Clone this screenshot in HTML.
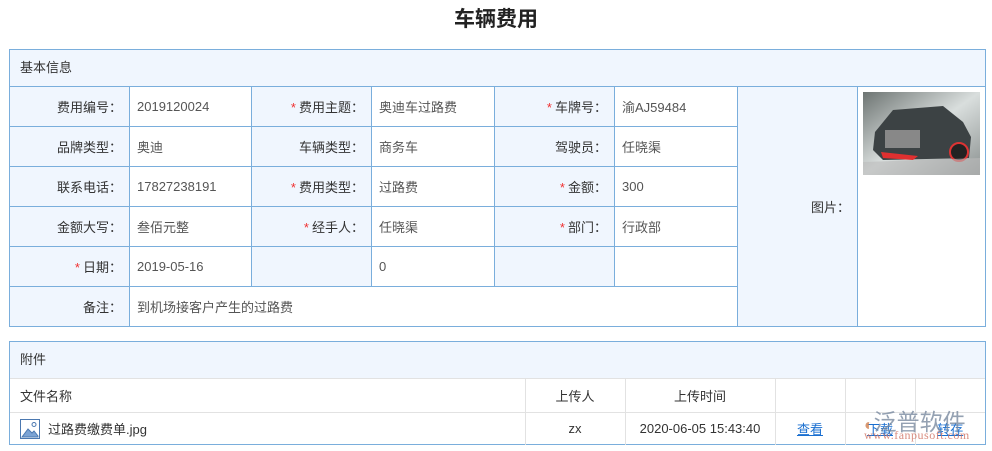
<!DOCTYPE html>
<html><head><meta charset="utf-8"><style>
*{margin:0;padding:0;box-sizing:border-box}
body{width:992px;height:451px;background:#fff;font-family:"Liberation Sans","Noto Sans CJK SC",sans-serif;font-size:13px;color:#333;position:relative;overflow:hidden}
.title{position:absolute;left:0;width:992px;top:3px;text-align:center;font-size:21px;font-weight:bold;color:#222}
.box{position:absolute;left:9px;width:977px;border:1px solid #7aaedc}
.hd{background:#f0f6fe;border-bottom:1px solid #7aaedc;padding-left:10px;color:#333}
table{border-collapse:collapse;table-layout:fixed}
.g td{border:1px solid #7aaedc;height:40px;padding:0 7px}
.g td.l{background:#f0f6fe;text-align:right;color:#333}
.g td.v{background:#fff;color:#555}
.s{color:#f03030;margin-right:3px}
.a td{border:1px solid #e2e2e2;height:33px;padding:0 10px;text-align:center;color:#333}
.a tr td:first-child{text-align:left;border-left:none}
.a tr td:last-child{border-right:none}
.a tr:first-child td{border-top:none}
.a tr:last-child td{border-bottom:none;height:33px}
a{color:#1a6fd0;text-decoration:underline}
</style></head><body>
<div class="title">车辆费用</div>
<div class="box" style="top:49px;height:278px">
<div class="hd" style="height:37px;line-height:36px">基本信息</div>
<table class="g" style="width:977px;margin:-1px 0 0 -1px">
<colgroup><col style="width:120px"><col style="width:122px"><col style="width:120px"><col style="width:123px"><col style="width:120px"><col style="width:123px"><col style="width:120px"><col></colgroup>
<tr><td class="l">费用编号：</td><td class="v">2019120024</td><td class="l"><span class="s">*</span>费用主题：</td><td class="v">奥迪车过路费</td><td class="l"><span class="s">*</span>车牌号：</td><td class="v">渝AJ59484</td><td class="l" rowspan="6">图片：</td><td class="v" rowspan="6" style="vertical-align:top;padding:5px 5px 0 5px">
<svg width="117" height="83" viewBox="0 0 117 83"><defs><linearGradient id="bg" x1="0" y1="0" x2="1" y2="1"><stop offset="0" stop-color="#6d7472"/><stop offset=".5" stop-color="#d9dedd"/><stop offset="1" stop-color="#8b9190"/></linearGradient></defs><rect width="117" height="83" fill="url(#bg)"/><path d="M12 40 L30 18 L80 14 L100 30 L108 45 L106 66 L20 68 L10 58Z" fill="#3c4244"/><rect x="22" y="38" width="35" height="18" fill="#888"/><path d="M18 60 L55 64 L50 68 L20 66Z" fill="#e03030"/><circle cx="96" cy="60" r="9" fill="#222" stroke="#d33" stroke-width="2"/><path d="M0 70 L117 66 L117 83 L0 83Z" fill="#bbb" opacity=".6"/></svg></td></tr>
<tr><td class="l">品牌类型：</td><td class="v">奥迪</td><td class="l">车辆类型：</td><td class="v">商务车</td><td class="l">驾驶员：</td><td class="v">任晓渠</td></tr>
<tr><td class="l">联系电话：</td><td class="v">17827238191</td><td class="l"><span class="s">*</span>费用类型：</td><td class="v">过路费</td><td class="l"><span class="s">*</span>金额：</td><td class="v">300</td></tr>
<tr><td class="l">金额大写：</td><td class="v">叁佰元整</td><td class="l"><span class="s">*</span>经手人：</td><td class="v">任晓渠</td><td class="l"><span class="s">*</span>部门：</td><td class="v">行政部</td></tr>
<tr><td class="l"><span class="s">*</span>日期：</td><td class="v">2019-05-16</td><td class="l"></td><td class="v">0</td><td class="l"></td><td class="v"></td></tr>
<tr><td class="l">备注：</td><td class="v" colspan="5">到机场接客户产生的过路费</td></tr>
</table>
</div>
<div class="box" style="top:341px;height:104px">
<div class="hd" style="height:37px;line-height:36px;border-bottom-color:#e2e2e2">附件</div>
<table class="a" style="width:975px">
<colgroup><col style="width:515px"><col style="width:100px"><col style="width:150px"><col style="width:70px"><col style="width:70px"><col></colgroup>
<tr><td>文件名称</td><td>上传人</td><td>上传时间</td><td></td><td></td><td></td></tr>
<tr><td><svg width="20" height="20" viewBox="0 0 20 20" style="vertical-align:-5px;margin-right:8px"><rect x=".5" y=".5" width="19" height="19" fill="#fff" stroke="#4b78b0"/><path d="M2 18 L8 10 L12 14 L14 12 L18 17 L18 18Z" fill="#7ba3d4" stroke="#4b78b0"/><circle cx="14" cy="5.5" r="2" fill="none" stroke="#4b78b0"/></svg>过路费缴费单.jpg</td><td>zx</td><td>2020-06-05 15:43:40</td><td><a>查看</a></td><td><a>下载</a></td><td><a>转存</a></td></tr>
</table>
</div>
<div style="position:absolute;left:864px;top:403px;font-size:23px;color:#7a8aa0;opacity:.8;letter-spacing:0"><span style="color:#d08050;font-size:16px">◐</span>泛普软件</div>
<div style="position:absolute;left:864px;top:428px;font-size:12px;color:#d07060;font-family:'Liberation Serif',serif;opacity:.8;letter-spacing:.5px">www.fanpusoft.com</div>
</body></html>
